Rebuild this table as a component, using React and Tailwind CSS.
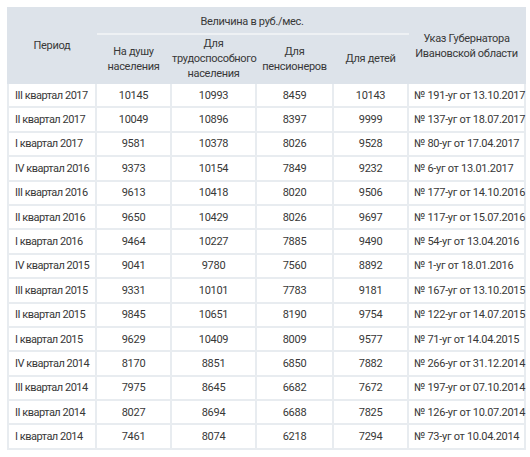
import React from "react";

const rows = [
  ["III квартал 2017", "10145", "10993", "8459", "10143", "№ 191-уг от 13.10.2017"],
  ["II квартал 2017", "10049", "10896", "8397", "9999", "№ 137-уг от 18.07.2017"],
  ["I квартал 2017", "9581", "10378", "8026", "9528", "№ 80-уг от 17.04.2017"],
  ["IV квартал 2016", "9373", "10154", "7849", "9232", "№ 6-уг от 13.01.2017"],
  ["III квартал 2016", "9613", "10418", "8020", "9506", "№ 177-уг от 14.10.2016"],
  ["II квартал 2016", "9650", "10429", "8026", "9697", "№ 117-уг от 15.07.2016"],
  ["I квартал 2016", "9464", "10227", "7885", "9490", "№ 54-уг от 13.04.2016"],
  ["IV квартал 2015", "9041", "9780", "7560", "8892", "№ 1-уг от 18.01.2016"],
  ["III квартал 2015", "9331", "10101", "7783", "9181", "№ 167-уг от 13.10.2015"],
  ["II квартал 2015", "9845", "10651", "8190", "9754", "№ 122-уг от 14.07.2015"],
  ["I квартал 2015", "9629", "10409", "8009", "9577", "№ 71-уг от 14.04.2015"],
  ["IV квартал 2014", "8170", "8851", "6850", "7882", "№ 266-уг от 31.12.2014"],
  ["III квартал 2014", "7975", "8645", "6682", "7672", "№ 197-уг от 07.10.2014"],
  ["II квартал 2014", "8027", "8694", "6688", "7825", "№ 126-уг от 10.07.2014"],
  ["I квартал 2014", "7461", "8074", "6218", "7294", "№ 73-уг от 10.04.2014"],
];

export default function App() {
  return (
    <div className="bg-white w-[530px] h-[457px] pt-[7px] pl-[7px] text-[#383838] text-[11px] leading-[15px] tracking-[-0.3px]" style={{ fontFamily: 'Roboto, "Noto Sans", sans-serif' }}>
      <table className="border-collapse table-fixed w-[517px]">
        <colgroup>
          <col className="w-[88px]" />
          <col className="w-[75px]" />
          <col className="w-[85px]" />
          <col className="w-[77px]" />
          <col className="w-[75px]" />
          <col className="w-[117px]" />
        </colgroup>
        <thead>
          <tr className="bg-[#dde3ea]">
            <th rowSpan={2} className="font-normal border-2 border-[#dde3ea] text-center align-middle">Период</th>
            <th colSpan={4} className="font-normal h-[26px] border-2 border-[#dde3ea] border-b-[#eef1f4] text-center align-middle">Величина в руб./мес.</th>
            <th rowSpan={2} className="font-normal border-2 border-[#dde3ea] text-center align-middle whitespace-nowrap">Указ Губернатора<br />Ивановской области</th>
          </tr>
          <tr className="bg-[#dde3ea]">
            <th className="font-normal h-[49px] border-2 border-[#dde3ea] text-center align-middle">На душу<br />населения</th>
            <th className="font-normal border-2 border-[#dde3ea] text-center align-middle">Для<br />трудоспособного<br />населения</th>
            <th className="font-normal border-2 border-[#dde3ea] text-center align-middle">Для<br />пенсионеров</th>
            <th className="font-normal border-2 border-[#dde3ea] text-center align-middle">Для детей</th>
          </tr>
        </thead>
        <tbody>
          {rows.map((r, i) => (
            <tr key={i} className="h-[24.4px]">
              <td className="border-2 border-[#e8ecf0] pl-[6px] whitespace-nowrap tracking-[-0.5px]">{r[0]}</td>
              <td className="border-2 border-[#e8ecf0] text-center">{r[1]}</td>
              <td className="border-2 border-[#e8ecf0] text-center">{r[2]}</td>
              <td className="border-2 border-[#e8ecf0] text-center">{r[3]}</td>
              <td className="border-2 border-[#e8ecf0] text-center">{r[4]}</td>
              <td className="border-2 border-[#e8ecf0] pl-[5px] whitespace-nowrap">{r[5]}</td>
            </tr>
          ))}
        </tbody>
      </table>
    </div>
  );
}
